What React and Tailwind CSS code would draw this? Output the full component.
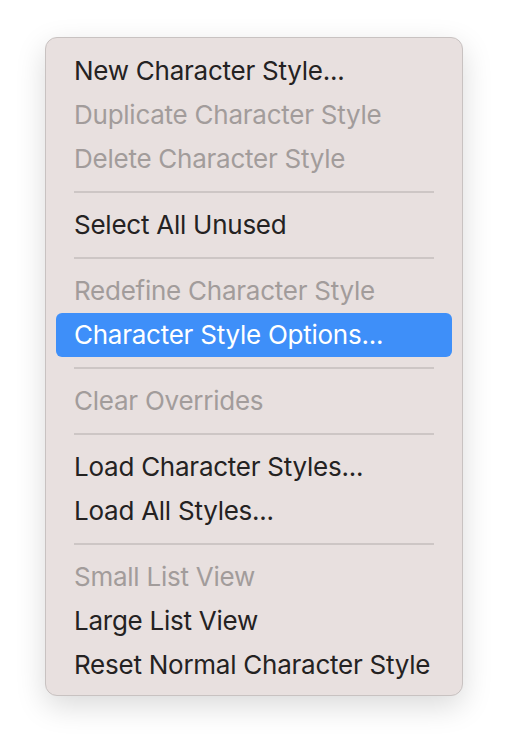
import React from "react";

const groups = [
  [
    { t: "New Character Style..." },
    { t: "Duplicate Character Style", d: true },
    { t: "Delete Character Style", d: true },
  ],
  [{ t: "Select All Unused" }],
  [
    { t: "Redefine Character Style", d: true },
    { t: "Character Style Options...", h: true },
  ],
  [{ t: "Clear Overrides", d: true }],
  [{ t: "Load Character Styles..." }, { t: "Load All Styles..." }],
  [
    { t: "Small List View", d: true },
    { t: "Large List View" },
    { t: "Reset Normal Character Style" },
  ],
];

function Item({ t, d, h }) {
  const color = h ? "bg-[#3e8ff9] text-white" : d ? "text-[#a29c9b]" : "text-[#242222]";
  return (
    <div className={`h-[44px] mx-[10px] rounded-[6px] flex items-center pl-[18px] text-[26px] tracking-[-0.25px] leading-none whitespace-nowrap ${color}`}>
      {t}
    </div>
  );
}

export default function App() {
  return (
    <div className="w-[508px] h-[750px] bg-white flex" style={{ fontFamily: "Inter, 'Noto Sans', sans-serif" }}>
      <div className="mt-[37px] ml-[45px] w-[418px] h-[659px] rounded-[12px] bg-[#e8e0df] border border-[#c8c2c1] shadow-[0_10px_30px_rgba(0,0,0,0.15)] pt-[11px] pb-[8px] flex flex-col">
        {groups.map((g, i) => (
          <React.Fragment key={i}>
            {i > 0 && (
              <div className="h-[22px] flex items-center px-[28px]">
                <div className="h-[2px] w-full bg-[#cdc6c5]" />
              </div>
            )}
            {g.map((it) => (
              <Item key={it.t} {...it} />
            ))}
          </React.Fragment>
        ))}
      </div>
    </div>
  );
}
